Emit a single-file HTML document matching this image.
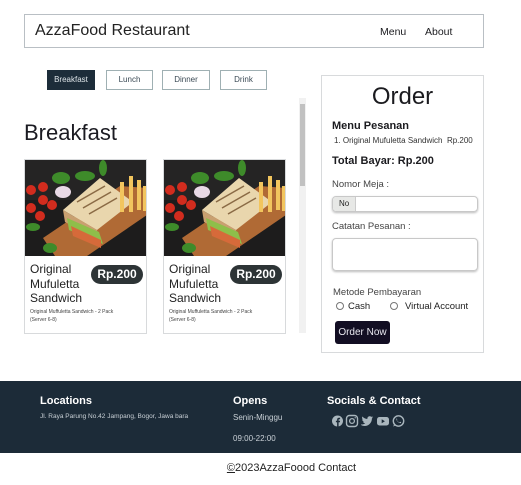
<!DOCTYPE html>
<html><head><meta charset="utf-8"><style>
*{margin:0;padding:0;box-sizing:border-box}
body{width:521px;height:485px;background:#fff;font-family:"Liberation Sans",sans-serif;color:#1b1b1f;position:relative;overflow:hidden}
.a{position:absolute;white-space:nowrap}
.nav{left:24px;top:14px;width:460px;height:34px;border:1px solid #b9bfc4}
.tab{height:20px;border:1px solid #9fb0b3;font-size:8px;color:#3b4a55;text-align:center;line-height:18px;top:70px}
.card{width:123px;height:175px;border:1px solid #d8dadc;top:159px}
.card svg{display:block}
.pill{background:#2d3436;color:#fff;font-weight:bold;font-size:12px;border-radius:10px;width:52px;height:19px;line-height:19px;text-align:center}
.ct{font-size:12px;line-height:14.5px;color:#222}
.cd{font-size:5px;line-height:8px;color:#444}
.ft{background:#1c2b38;left:0;top:381px;width:521px;height:72px}
.fh{color:#fff;font-weight:bold;font-size:11px}
.fs{color:#c9d0d6;font-size:8px}
</style></head><body>
<div class="a nav"></div>
<div class="a" style="left:35px;top:22px;font-size:16px;color:#222">AzzaFood Restaurant</div>
<div class="a" style="left:380px;top:26px;font-size:10.5px">Menu</div>
<div class="a" style="left:425px;top:26px;font-size:10.5px">About</div>

<div class="a tab" style="left:47px;width:48px;background:#1d2d3a;border-color:#1d2d3a;color:#dfe6ea">Breakfast</div>
<div class="a tab" style="left:106px;width:47px">Lunch</div>
<div class="a tab" style="left:162px;width:48px">Dinner</div>
<div class="a tab" style="left:220px;width:47px">Drink</div>

<div class="a" style="left:299px;top:98px;width:7px;height:235px;background:#f1f1f1"></div>
<div class="a" style="left:300px;top:104px;width:5px;height:82px;background:#c1c1c1"></div>

<div class="a" style="left:24px;top:120px;font-size:22px;color:#1b1b22">Breakfast</div>

<svg width="0" height="0" style="position:absolute"><defs>
<g id="img">
<rect width="122" height="96" fill="#1d1c1c"/>
<rect x="0" y="0" width="122" height="40" fill="#252424"/>
<polygon points="18,78 95,26 122,28 122,55 62,96 30,96" fill="#b06a35"/>
<polygon points="38,50 75,18 108,42 72,70" fill="#e9d6ad"/>
<polygon points="38,50 72,70 74,80 40,62" fill="#c9a070"/>
<polygon points="42,58 74,72 78,84 44,70" fill="#8ebf4a"/>
<polygon points="46,66 76,80 76,88 48,76" fill="#d66a3a"/>
<g stroke="#8a6a45" stroke-width="1.5"><line x1="52" y1="42" x2="80" y2="26"/><line x1="58" y1="48" x2="86" y2="32"/><line x1="64" y1="54" x2="92" y2="38"/></g>
<g fill="#f2c55e"><rect x="95" y="22" width="4" height="30"/><rect x="104" y="16" width="4" height="36"/><rect x="112" y="20" width="4" height="30"/><rect x="118" y="26" width="4" height="25"/></g>
<g fill="#d22c1e"><circle cx="6" cy="30" r="5"/><circle cx="18" cy="27" r="5"/><circle cx="18" cy="40" r="5"/><circle cx="6" cy="48" r="5"/><circle cx="27" cy="45" r="5"/><circle cx="15" cy="56" r="5"/></g>
<ellipse cx="38" cy="32" rx="8" ry="6" fill="#e9d9e6"/>
<g fill="#3e8b2a"><ellipse cx="36" cy="18" rx="9" ry="6"/><ellipse cx="60" cy="16" rx="10" ry="5"/><ellipse cx="78" cy="8" rx="4" ry="8"/><ellipse cx="8" cy="67" rx="7" ry="4"/><ellipse cx="25" cy="88" rx="7" ry="5"/></g>
</g></defs></svg>

<div class="a card" style="left:24px"><svg width="121" height="96"><use href="#img"/></svg></div>
<div class="a card" style="left:163px"><svg width="121" height="96"><use href="#img"/></svg></div>
<div class="a ct" style="left:30px;top:262px">Original<br>Mufuletta<br>Sandwich</div>
<div class="a pill" style="left:91px;top:265px">Rp.200</div>
<div class="a cd" style="left:30px;top:308px">Original Muffuletta Sandwich - 2 Pack<br>(Server 6-8)</div>
<div class="a ct" style="left:169px;top:262px">Original<br>Mufuletta<br>Sandwich</div>
<div class="a pill" style="left:230px;top:265px">Rp.200</div>
<div class="a cd" style="left:169px;top:308px">Original Muffuletta Sandwich - 2 Pack<br>(Server 6-8)</div>

<div class="a" style="left:321px;top:75px;width:163px;height:278px;border:1px solid #d8dadc"></div>
<div class="a" style="left:321px;top:83px;width:163px;text-align:center;font-size:24px">Order</div>
<div class="a" style="left:332px;top:120px;font-size:11px;font-weight:bold">Menu Pesanan</div>
<div class="a" style="left:334px;top:136px;font-size:8px;color:#333">1. Original Mufuletta Sandwich&nbsp; Rp.200</div>
<div class="a" style="left:332px;top:155px;font-size:11px;font-weight:bold">Total Bayar: Rp.200</div>
<div class="a" style="left:332px;top:179px;font-size:9.5px;color:#444">Nomor Meja :</div>
<div class="a" style="left:332px;top:196px;width:146px;height:16px;border:1px solid #c8c8c8;border-radius:4px;box-shadow:0 1px 2px #bbb"></div>
<div class="a" style="left:333px;top:197px;width:23px;height:14px;background:#e7e8e6;border-right:1px solid #ccc;border-radius:3px 0 0 3px;font-size:8px;line-height:14px;padding-left:6px;color:#222">No</div>
<div class="a" style="left:332px;top:221px;font-size:9.5px;color:#444">Catatan Pesanan :</div>
<div class="a" style="left:332px;top:238px;width:146px;height:33px;border:1px solid #c8c8c8;border-radius:4px;box-shadow:0 1px 2px #bbb"></div>
<div class="a" style="left:333px;top:287px;font-size:9.5px;color:#444">Metode Pembayaran</div>
<div class="a" style="left:336px;top:302px;width:8px;height:8px;border:1px solid #777;border-radius:50%"></div>
<div class="a" style="left:348px;top:301px;font-size:9.5px;color:#222">Cash</div>
<div class="a" style="left:390px;top:302px;width:8px;height:8px;border:1px solid #777;border-radius:50%"></div>
<div class="a" style="left:405px;top:301px;font-size:9.5px;color:#222">Virtual Account</div>
<div class="a" style="left:335px;top:321px;width:55px;height:23px;background:#120e23;border-radius:3px;color:#e8e8f0;font-size:10px;line-height:23px;text-align:center">Order Now</div>

<div class="a ft"></div>
<div class="a fh" style="left:40px;top:395px">Locations</div>
<div class="a fs" style="left:40px;top:413px;font-size:6.5px">Jl. Raya Parung No.42 Jampang, Bogor, Jawa bara</div>
<div class="a fh" style="left:233px;top:395px">Opens</div>
<div class="a fs" style="left:233px;top:413px">Senin-Minggu</div>
<div class="a fs" style="left:233px;top:434px">09:00-22:00</div>
<div class="a fh" style="left:327px;top:395px">Socials &amp; Contact</div>
<svg class="a" style="left:331px;top:414px" width="76" height="14" viewBox="0 0 76 14" fill="#a9b6bd">
<circle cx="6.5" cy="7" r="5.5"/><path d="M7.6 12.5V8.2h1.3l.2-1.5H7.6V5.9c0-.4.2-.7.7-.7h.8V3.8H8c-1.2 0-1.9.7-1.9 1.9v1H4.9v1.5h1.2v4.3z" fill="#1c2b38"/>
<rect x="15.5" y="1.5" width="11" height="11" rx="3" fill="none" stroke="#a9b6bd" stroke-width="1.4"/><circle cx="21" cy="7" r="2.4" fill="none" stroke="#a9b6bd" stroke-width="1.3"/><circle cx="24.2" cy="3.8" r=".7"/>
<path d="M30 10.5c1.8.2 3.3-.3 4.2-1.2-1.1 0-1.9-.7-2.2-1.5.4.1.7 0 1-.1-1.1-.3-1.9-1.2-1.9-2.4.3.2.7.3 1 .3-1.1-.7-1.3-2.1-.7-3.1 1.2 1.5 3 2.4 5 2.5-.3-1.5.8-2.8 2.3-2.8.7 0 1.3.3 1.7.7.5-.1 1-.3 1.4-.5-.2.5-.5.9-1 1.2.4 0 .9-.2 1.3-.3-.3.5-.7.9-1.2 1.2.1 3.8-2.8 7.5-7.3 7.5-1.3 0-2.6-.4-3.6-1z"/>
<rect x="46" y="3" width="12" height="8.5" rx="2.5"/><path d="M50.7 5.3v4l3.2-2z" fill="#1c2b38"/>
<circle cx="67.5" cy="7" r="5.2" fill="none" stroke="#a9b6bd" stroke-width="1.4"/><path d="M62.3 12.6l.9-3 1.5 1.5z"/><path d="M65.6 5.3c.3 1.5 1.4 2.7 2.9 3.1l.7-.7 1 .5-.3.9c-2 .1-4.3-1.9-4.8-4.2l.8-.4.5 1z"/>
</svg>

<div class="a" style="left:31px;top:462px;width:521px;text-align:center;font-size:11px;color:#222"><span style="text-decoration:underline">©</span>2023AzzaFoood Contact</div>
</body></html>
